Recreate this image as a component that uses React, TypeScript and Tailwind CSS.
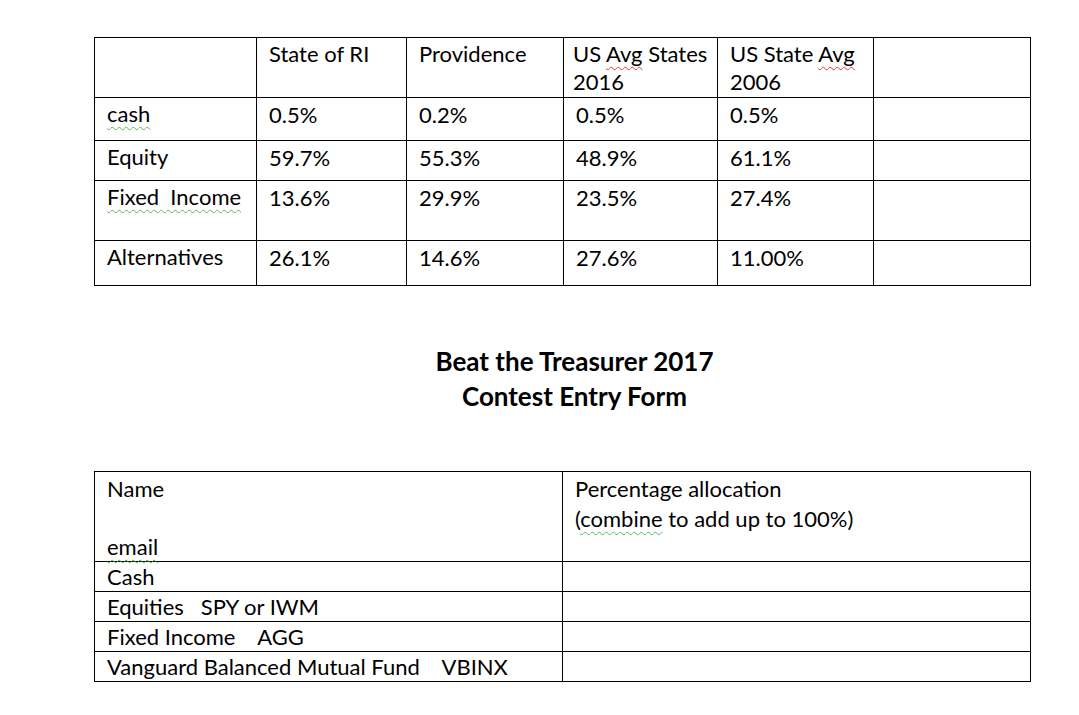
const squiggleGreen =
  "underline decoration-wavy decoration-[#5cb85c] decoration-1 underline-offset-[4px]";
const squiggleRed =
  "underline decoration-wavy decoration-[#e0393e] decoration-1 underline-offset-[4px]";

const cell = "border border-black align-top px-[12px] pt-[2px] whitespace-nowrap";

const holdings = [
  { label: <span className={squiggleGreen}>cash</span>, h: "h-[43px]", v: ["0.5%", "0.2%", "0.5%", "0.5%"] },
  { label: "Equity", h: "h-[40px]", v: ["59.7%", "55.3%", "48.9%", "61.1%"] },
  {
    label: <span className={`${squiggleGreen} whitespace-pre`}>Fixed  Income</span>,
    h: "h-[60px]",
    v: ["13.6%", "29.9%", "23.5%", "27.4%"],
  },
  { label: "Alternatives", h: "h-[45px]", v: ["26.1%", "14.6%", "27.6%", "11.00%"] },
];

const entryRows = ["Cash", "Equities   SPY or IWM", "Fixed Income    AGG", "Vanguard Balanced Mutual Fund    VBINX"];

export default function App() {
  return (
    <div className="min-h-[715px] w-[1079px] bg-white pt-[37px] pl-[94px] text-black font-['Lato',sans-serif] text-[22px] leading-[28px]">
      <table className="w-[936px] table-fixed border-collapse">
        <colgroup>
          <col className="w-[162px]" />
          <col className="w-[150px]" />
          <col className="w-[157px]" />
          <col className="w-[154px]" />
          <col className="w-[156px]" />
          <col className="w-[157px]" />
        </colgroup>
        <tbody>
          <tr className="h-[60px]">
            <td className={cell}></td>
            <td className={cell}>State of RI</td>
            <td className={cell}>Providence</td>
            <td className={`${cell} pl-[9px]`}>
              US <span className={squiggleRed}>Avg</span> States
              <br />
              2016
            </td>
            <td className={cell}>
              US State <span className={squiggleRed}>Avg</span>
              <br />
              2006
            </td>
            <td className={cell}></td>
          </tr>
          {holdings.map((row, i) => (
            <tr key={i} className={row.h}>
              <td className={cell}>{row.label}</td>
              {row.v.map((v, j) => (
                <td key={j} className={`${cell} pt-[3px]`}>
                  {v}
                </td>
              ))}
              <td className={cell}></td>
            </tr>
          ))}
        </tbody>
      </table>

      <div className="mt-[58px] w-[936px] pl-[25px] text-center text-[26px] font-bold leading-[35px]">
        <p>Beat the Treasurer 2017</p>
        <p>Contest Entry Form</p>
      </div>

      <table className="mt-[57px] w-[936px] table-fixed border-collapse leading-[28px]">
        <colgroup>
          <col className="w-[468px]" />
          <col className="w-[468px]" />
        </colgroup>
        <tbody>
          <tr className="h-[89px]">
            <td className={`${cell} leading-[29px]`}>
              Name
              <br />
              <br />
              <span className={squiggleGreen}>email</span>
            </td>
            <td className={`${cell} leading-[30px]`}>
              Percentage allocation
              <br />
              (<span className={squiggleGreen}>combine</span> to add up to 100%)
            </td>
          </tr>
          {entryRows.map((r) => (
            <tr key={r} className="h-[30px]">
              <td className="border border-black px-[12px] py-0 align-middle whitespace-pre">{r}</td>
              <td className="border border-black p-0"></td>
            </tr>
          ))}
        </tbody>
      </table>
    </div>
  );
}
